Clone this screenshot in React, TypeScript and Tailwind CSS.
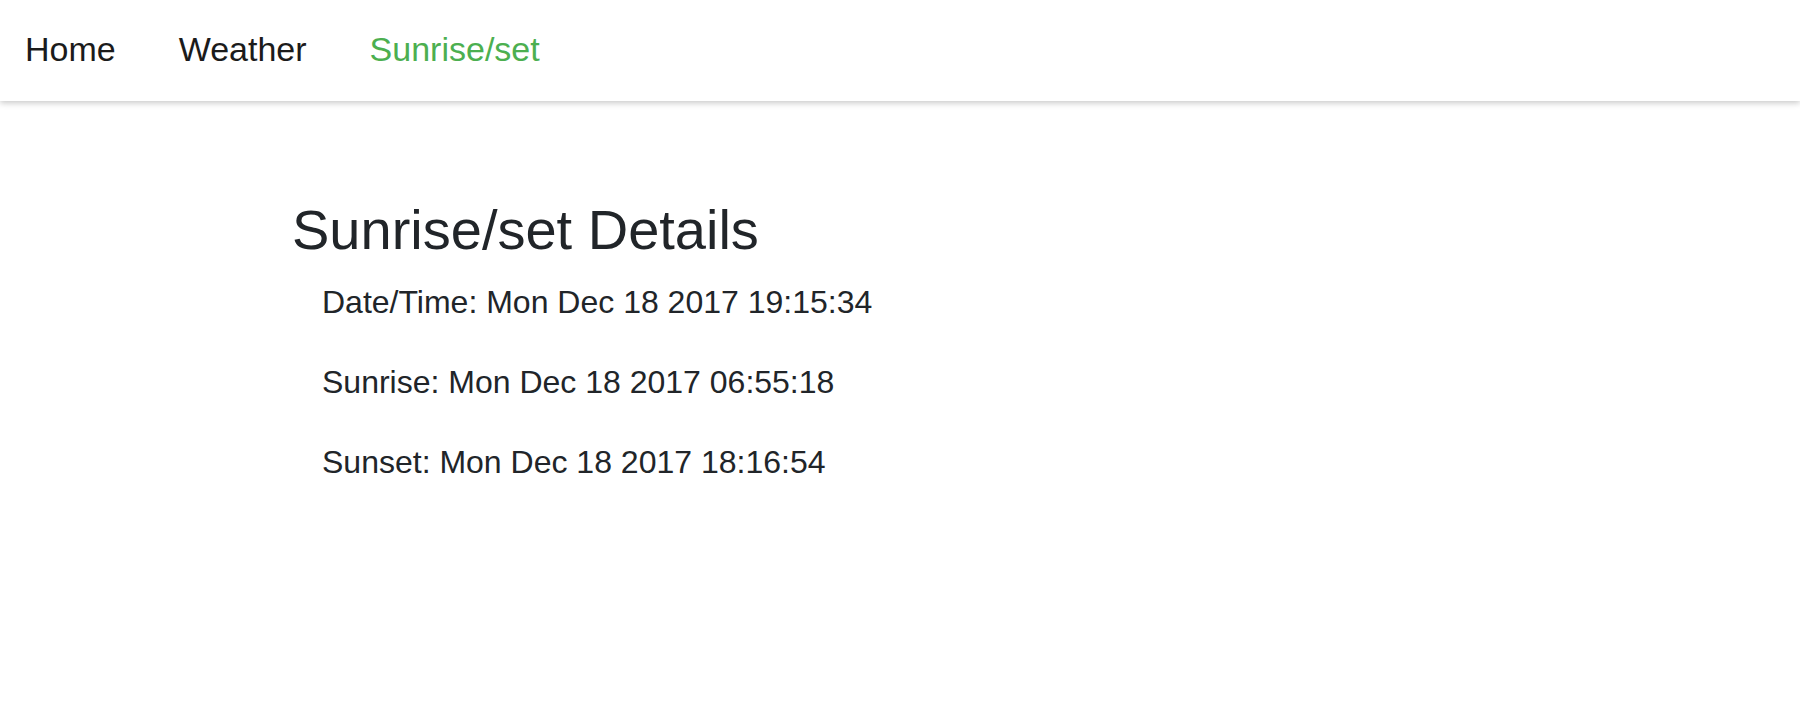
import React from "react";

const links = [
    { label: "Home", active: false },
    { label: "Weather", active: false },
    { label: "Sunrise/set", active: true },
];

const details = [
    { label: "Date/Time", value: "Mon Dec 18 2017 19:15:34" },
    { label: "Sunrise", value: "Mon Dec 18 2017 06:55:18" },
    { label: "Sunset", value: "Mon Dec 18 2017 18:16:54" },
];

const App = () => {
    return (
        <div className="min-h-[712px] bg-white font-['Liberation_Sans',Arial,sans-serif] text-[#212529]">
            <nav className="relative h-[101px] bg-white pt-[29px] pl-[25px] shadow-[0_2px_6px_rgba(0,0,0,0.22)]">
                <ul className="flex gap-[63px]">
                    {links.map((link) => (
                        <li key={link.label}>
                            <a href="#" className={`text-[34px] leading-[40px] ${link.active ? "text-[#4caf50]" : "text-[#1b1b1b]"}`}>
                                {link.label}
                            </a>
                        </li>
                    ))}
                </ul>
            </nav>

            <main className="pl-[292px] pt-[97px]">
                <h1 className="text-[56px] leading-[64px] font-normal">Sunrise/set Details</h1>
                <div className="mt-[20px] flex flex-col gap-[40px] pl-[30px]">
                    {details.map((d) => (
                        <p key={d.label} className="text-[32px] leading-[40px]">
                            {d.label}: {d.value}
                        </p>
                    ))}
                </div>
            </main>
        </div>
    );
};

export default App;
